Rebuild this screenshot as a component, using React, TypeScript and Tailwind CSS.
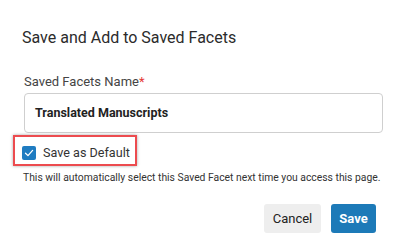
import React from "react";

export default function App() {
  return (
    <div className="w-[403px] h-[246px] bg-white font-['Roboto',sans-serif] text-[#333] overflow-hidden">
      <div className="pl-[22px] pt-[28px]">
        <h1 className="text-[16px] leading-[20px] font-normal text-[#2b2b2b]">Save and Add to Saved Facets</h1>
      </div>
      <div className="pl-[24px] pr-[20px] mt-[26px]">
        <label className="block text-[13px] leading-[16px] text-[#444]">
          Saved Facets Name<span className="text-[#e53935]">*</span>
        </label>
        <div className="mt-[3px] w-[359px] h-[40px] border border-[#cfcfcf] rounded-[4px] flex items-center pl-[10px] text-[12.5px] font-bold text-[#222]">
          Translated Manuscripts
        </div>
      </div>
      <div className="pl-[13px] mt-[2px]">
        <div className="w-[124px] h-[31px] border-2 border-[#ec4b4f] shadow-[0_0_3px_rgba(0,0,0,0.35)] flex items-center pl-[7px] pt-[5px] gap-[7px] whitespace-nowrap">
          <span className="shrink-0 w-[14px] h-[14px] rounded-[2px] bg-[#1f7cc1] flex items-center justify-center">
            <svg width="10" height="10" viewBox="0 0 10 10" fill="none">
              <path d="M1.5 5.2 L4 7.6 L8.6 2.4" stroke="white" strokeWidth="1.3" strokeLinecap="round" strokeLinejoin="round" />
            </svg>
          </span>
          <span className="text-[12.6px] leading-[16px] text-[#333]">Save as Default</span>
        </div>
      </div>
      <p className="pl-[23px] mt-[6px] text-[10.35px] leading-[12px] text-[#333] whitespace-nowrap">
        This will automatically select this Saved Facet next time you access this page.
      </p>
      <div className="flex justify-end gap-[10px] pr-[27px] mt-[20px]">
        <button className="w-[57px] h-[29px] rounded-[3px] bg-[#eeeeee] text-[13px] text-[#222]">Cancel</button>
        <button className="w-[45px] h-[29px] rounded-[3px] bg-[#1d7ab8] text-[13px] font-bold text-white">Save</button>
      </div>
    </div>
  );
}
